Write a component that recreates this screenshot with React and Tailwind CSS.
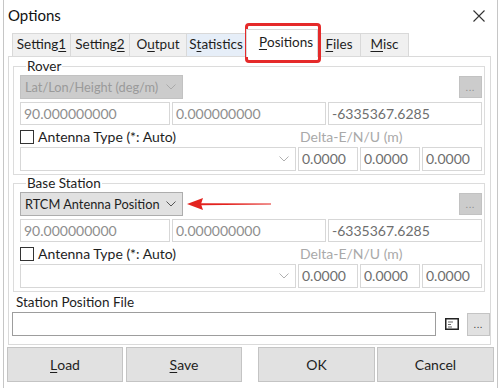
import React from 'react';

function Chevron({ color = '#9a9a9a' }) {
    return (
        <svg width="10" height="6" viewBox="0 0 10 6" className="shrink-0">
            <path d="M0.5 0.5 L5 5 L9.5 0.5" fill="none" stroke={color} strokeWidth="1" />
        </svg>
    );
}

function Field({ value, className = '', tone = 'text-[#8e8e8e]' }) {
    return (
        <div className={`h-[23px] border border-[#d7d7d7] bg-white flex items-center px-[3px] ${tone} ${className}`}>
            {value}
        </div>
    );
}

function Dots() {
    return (
        <div className="w-[23px] h-[22px] bg-[#cccccc] border border-[#c2c2c2] flex items-center justify-center text-[9px] tracking-[1px] text-[#8a8a8a] leading-none">
            ...
        </div>
    );
}

function Group({ title, comboText, active, arrow }) {
    const combo = active
        ? 'bg-[#e1e1e1] border-[#adadad] text-[#1e1e1e]'
        : 'bg-[#cccccc] border-[#c2c2c2] text-[#9a9a9a]';
    return (
        <fieldset className="ml-[4px] w-[472px] border border-[#dcdcdc] pl-[6px] pr-[2px] pb-[3px]">
            <legend className="ml-[6px] px-[1px] text-[13.5px] leading-[17px] text-[#222]">{title}</legend>
            <div className="flex items-center h-[24px]">
                <div className={`w-[163px] h-[24px] border flex items-center pl-[4px] pr-[6px] whitespace-nowrap text-[12.8px] ${combo}`}>
                    <span>{comboText}</span>
                    <span className="ml-auto"><Chevron color={active ? '#555' : '#aaaaaa'} /></span>
                </div>
                {arrow && (
                    <svg width="84" height="14" viewBox="0 0 84 14" className="ml-[4px]">
                        <path d="M14 6.2 L84 6.6 L84 7.4 L14 8.2 Z" fill="#e3231f" />
                        <path d="M0 7 L16 1 L14 7 L16 13 Z" fill="#e3231f" />
                    </svg>
                )}
                <div className="flex-1" />
                <Dots />
            </div>
            <div className="flex gap-[2px] mt-[3px]">
                <Field value="90.000000000" className="w-[150px]" />
                <Field value="0.000000000" className="w-[154px]" />
                <Field value="-6335367.6285" className="w-[154px]" tone="text-[#6e6e6e]" />
            </div>
            <div className="flex items-center h-[20px] mt-[2px]">
                <div className="w-[280px] flex items-center">
                    <div className="w-[14px] h-[14px] border border-[#333] bg-white" />
                    <span className="ml-[4px] text-[#1e1e1e]">Antenna Type (*: Auto)</span>
                </div>
                <span className="text-[#a9a9a9]">Delta-E/N/U (m)</span>
            </div>
            <div className="flex gap-[2px]">
                <div className="w-[276px] h-[24px] border border-[#d7d7d7] bg-white flex items-center justify-end pr-[6px]">
                    <Chevron color="#b0b0b0" />
                </div>
                <Field value="0.0000" className="w-[60px] h-[24px]" tone="text-[#6e6e6e]" />
                <Field value="0.0000" className="w-[60px] h-[24px]" tone="text-[#6e6e6e]" />
                <Field value="0.0000" className="w-[60px] h-[24px]" tone="text-[#6e6e6e]" />
            </div>
        </fieldset>
    );
}

function Tab({ u, rest, pre = '', width, selected, hover }) {
    if (selected) {
        return (
            <div className={`relative z-10 -mb-px h-[28px] ${width} bg-white border border-b-0 border-[#d9d9d9] flex items-center justify-center pl-[8px] pb-[2px]`}>
                {pre}<span className="underline underline-offset-2">{u}</span>{rest}
            </div>
        );
    }
    return (
        <div className={`h-[23px] ${width} ${hover ? 'bg-[#e6eef8]' : 'bg-[#f0f0f0]'} border border-b-0 border-[#d9d9d9] -ml-px flex items-center justify-center`}>
            {pre}<span className="underline underline-offset-2">{u}</span>{rest}
        </div>
    );
}

function Btn({ children, className = '' }) {
    return (
        <div className={`h-[35px] bg-[#e1e1e1] border border-[#c4c4c4] flex items-center justify-center text-[14px] text-[#1e1e1e] ${className}`}>
            {children}
        </div>
    );
}

export default function App() {
    return (
        <div className="relative w-[500px] h-[388px] bg-white overflow-hidden font-['Lato',sans-serif] text-[14px] leading-none">
            <div className="ml-[3px] w-[495px] h-[388px] border-x border-[#c6c6c6] flex flex-col">
                <div className="h-[29px] flex items-center justify-between pl-[4px] pr-[12px] pt-[2px]">
                    <span className="text-[15px] text-[#111]">Options</span>
                    <svg width="12" height="12" viewBox="0 0 12 12">
                        <path d="M0.5 0.5 L11.5 11.5 M11.5 0.5 L0.5 11.5" stroke="#333" strokeWidth="1.1" />
                    </svg>
                </div>

                <div className="h-[27px] flex items-end pl-[9px] text-[#1e1e1e] text-[13.5px]">
                    <Tab pre="Setting" u="1" width="w-[59px]" />
                    <Tab pre="Setting" u="2" width="w-[60px]" />
                    <Tab pre="O" u="u" rest="tput" width="w-[58px]" />
                    <Tab pre="S" u="t" rest="atistics" width="w-[60px]" hover />
                    <Tab u="P" rest="ositions" width="w-[72px]" selected />
                    <Tab u="F" rest="iles" width="w-[44px]" />
                    <Tab u="M" rest="isc" width="w-[49px]" />
                </div>

                <div className="ml-[4px] w-[483px] border border-[#dadada] pt-[1px] pb-[8px]">
                    <Group title="Rover" comboText="Lat/Lon/Height (deg/m)" />
                    <Group title="Base Station" comboText="RTCM Antenna Position" active arrow />
                    <div className="ml-[7px] mt-[2px] h-[17px] flex items-center text-[#1e1e1e] text-[13.5px]">Station Position File</div>
                    <div className="flex items-center ml-[3px] mt-[1px]">
                        <div className="w-[425px] h-[24px] border border-[#9d9d9d] bg-white" />
                        <svg width="14" height="12" viewBox="0 0 14 12" className="ml-[9px]">
                            <rect x="0.75" y="0.75" width="12.5" height="10.5" fill="#fff" stroke="#222" strokeWidth="1.5" />
                            <path d="M3 4 H8 M3 6.5 H6 M3 9 H7" stroke="#666" strokeWidth="1" />
                        </svg>
                        <div className="ml-[8px] w-[23px] h-[23px] bg-[#e1e1e1] border border-[#c4c4c4] flex items-center justify-center text-[9px] tracking-[1px] text-[#333]">...</div>
                    </div>
                </div>

                <div className="flex mt-[2px] ml-[3px]">
                    <Btn className="w-[116px]"><span className="underline underline-offset-2">L</span>oad</Btn>
                    <Btn className="w-[116px] ml-[3px]"><span className="underline underline-offset-2">S</span>ave</Btn>
                    <Btn className="w-[117px] ml-[16px]">OK</Btn>
                    <Btn className="w-[117px] ml-[2px]">Cancel</Btn>
                </div>
            </div>

            <div className="absolute left-[245px] top-[23px] w-[76px] h-[40px] border-[3px] border-[#e52a2a] rounded-[4px]" />
        </div>
    );
}
